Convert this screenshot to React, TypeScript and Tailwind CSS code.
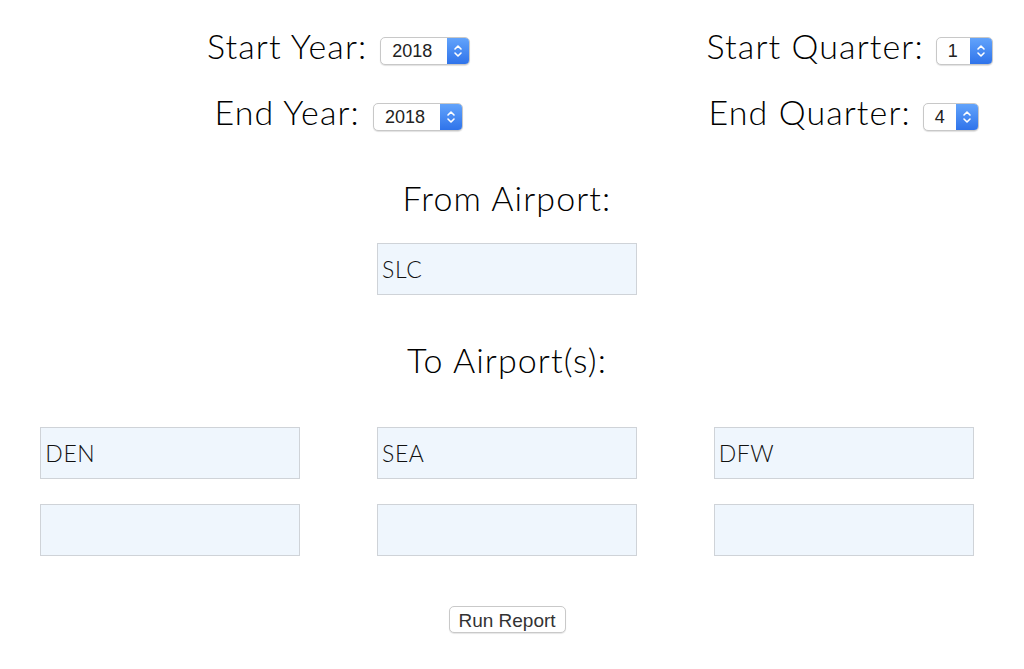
import React from "react";

const label = "font-['Lato',sans-serif] font-light text-[34px] tracking-[1.1px] leading-[44px] text-black";

function Select({ value, width }: { value: string; width: string }) {
  return (
    <div
      className={`flex h-[28px] ${width} items-stretch rounded-[5px] border border-[#c8c8c8] bg-white shadow-[0_1px_1px_rgba(0,0,0,0.12)]`}
    >
      <span className="flex flex-1 items-center pl-[11px] pt-[1px] font-['Liberation_Sans',sans-serif] text-[18px] text-[#222]">
        {value}
      </span>
      <span className="flex w-[22px] items-center justify-center rounded-r-[4px] bg-gradient-to-b from-[#62a3fb] to-[#2f73ea]">
        <svg width="10" height="16" viewBox="0 0 10 16" fill="none" stroke="white" strokeWidth="1.6" strokeLinecap="round" strokeLinejoin="round">
          <path d="M2 6 L5 3 L8 6" />
          <path d="M2 10 L5 13 L8 10" />
        </svg>
      </span>
    </div>
  );
}

function Field({ value }: { value?: string }) {
  return (
    <div className="mx-auto flex h-[52px] w-[260px] items-center border border-[#cfd3d8] bg-[#eff6fd] pl-[4px] font-['Lato',sans-serif] font-light text-[23px] tracking-[0.6px] text-[#111]">
      {value}
    </div>
  );
}

export default function App() {
  return (
    <div className="min-h-[669px] bg-white">
      <div className="ml-[2px] w-[1010px] pt-[18px]">
        <div className="grid grid-cols-3">
          <div className="col-span-2 flex h-[66px] items-center justify-center gap-[13px]">
            <span className={`${label} pb-[10px]`}>Start Year:</span>
            <Select value="2018" width="w-[90px]" />
          </div>
          <div className="flex h-[66px] items-center justify-center gap-[12px] pl-[12px]">
            <span className={`${label} pb-[10px]`}>Start Quarter:</span>
            <Select value="1" width="w-[57px]" />
          </div>
          <div className="col-span-2 flex h-[66px] items-center justify-center gap-[13px]">
            <span className={`${label} pb-[10px]`}>End Year:</span>
            <Select value="2018" width="w-[90px]" />
          </div>
          <div className="flex h-[66px] items-center justify-center gap-[12px]">
            <span className={`${label} pb-[10px]`}>End Quarter:</span>
            <Select value="4" width="w-[56px]" />
          </div>
        </div>

        <h2 className={`mt-[26px] text-center ${label}`}>From Airport:</h2>
        <div className="mt-[23px]">
          <Field value="SLC" />
        </div>

        <h2 className={`mt-[43px] text-center ${label}`}>To Airport(s):</h2>
        <div className="mt-[45px] grid grid-cols-3 gap-y-[25px]">
          <Field value="DEN" />
          <Field value="SEA" />
          <Field value="DFW" />
          <Field />
          <Field />
          <Field />
        </div>

        <div className="mt-[50px] flex justify-center">
          <button className="h-[27px] w-[117px] rounded-[5px] border border-[#c9c9c9] bg-white font-['Liberation_Sans',sans-serif] text-[19px] text-[#333] shadow-[0_1px_1px_rgba(0,0,0,0.1)]">
            Run Report
          </button>
        </div>
      </div>
    </div>
  );
}
